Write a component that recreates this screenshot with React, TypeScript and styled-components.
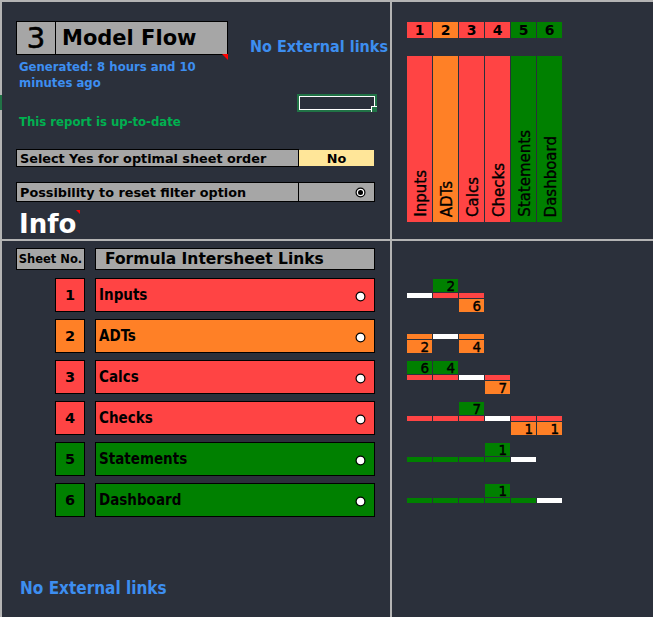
import React from 'react';
import styled, { createGlobalStyle } from 'styled-components';

const C = {
  bg: '#2b303b',
  line: '#b4b4b4',
  gray: '#a6a6a6',
  red: '#ff4444',
  orange: '#ff8026',
  green: '#008000',
  yellow: '#ffe699',
  blue: '#3d8ef0',
  ok: '#00b050',
  sel: '#217346',
};

const VERDANA = `"DejaVu Sans", Verdana, sans-serif`;
const TAHOMA = `"DejaVu Sans Condensed", "DejaVu Sans", sans-serif`;

const GlobalStyle = createGlobalStyle`
  html, body { margin: 0; padding: 0; background: ${C.bg}; }
  #root { width: 653px; height: 617px; }
`;

const Page = styled.div`
  width: 653px;
  height: 617px;
  box-sizing: border-box;
  padding: 2px 0 0 2px;
  background: ${C.line};
  display: grid;
  grid-template-columns: 388px 1fr;
  grid-template-rows: 237px 1fr;
  gap: 2px;
  position: relative;
  overflow: hidden;
  font-family: ${VERDANA};
  color: #000;
`;

const RowMarker = styled.div`
  position: absolute;
  left: 0;
  top: 95px;
  width: 2px;
  height: 15px;
  background: ${C.sel};
`;

const Panel = styled.section<{ $pad: string }>`
  background: ${C.bg};
  display: flex;
  flex-direction: column;
  align-items: flex-start;
  padding: ${(p) => p.$pad};
  min-width: 0;
  min-height: 0;
`;

/* ---------- top-left ---------- */
const TitleRow = styled.div`
  display: flex;
  align-items: flex-end;
`;

const TitleBox = styled.div`
  position: relative;
  display: flex;
  width: 212px;
  height: 34px;
  box-sizing: border-box;
  border: 1px solid #000;
  background: ${C.gray};
`;

const TitleNum = styled.div`
  width: 38px;
  border-right: 1px solid #000;
  display: flex;
  align-items: center;
  justify-content: center;
  font-size: 29px;
  line-height: 1;
  -webkit-text-stroke: 0.6px #000;
`;

const TitleName = styled.div`
  flex: 1;
  display: flex;
  align-items: center;
  padding-left: 6px;
  font-size: 21px;
  font-weight: bold;
  line-height: 1;
`;

const CommentMark = styled.span<{ $size: number }>`
  position: absolute;
  width: 0;
  height: 0;
  border-left: ${(p) => p.$size}px solid transparent;
  border-top: ${(p) => p.$size}px solid #ff0000;
`;

const TitleComment = styled(CommentMark)`
  right: -1px;
  top: 100%;
`;

const LinkNote = styled.div<{ $size: number }>`
  font-family: ${TAHOMA};
  font-stretch: condensed;
  font-weight: bold;
  font-size: ${(p) => p.$size}px;
  line-height: ${(p) => p.$size + 3}px;
  color: ${C.blue};
  white-space: nowrap;
`;

const TopLink = styled(LinkNote)`
  margin-left: 22px;
  margin-bottom: -1px;
`;

const InfoLine = styled.div<{ $color: string; $mt: number }>`
  margin-top: ${(p) => p.$mt}px;
  padding-left: 3px;
  font-family: ${TAHOMA};
  font-stretch: condensed;
  font-weight: bold;
  font-size: 13px;
  line-height: 16px;
  color: ${(p) => p.$color};
  white-space: nowrap;
`;

const SelRow = styled.div`
  align-self: stretch;
  display: flex;
  justify-content: flex-end;
  margin-top: 3px;
`;

const SelBox = styled.div`
  position: relative;
  width: 80px;
  height: 18px;
  box-sizing: border-box;
  border: 2px solid ${C.sel};
  box-shadow: inset 0 0 0 1px #fff;
`;

const FillHandle = styled.span`
  position: absolute;
  right: -2px;
  bottom: -2px;
  width: 5px;
  height: 5px;
  background: ${C.sel};
  border-left: 1px solid #fff;
  border-top: 1px solid #fff;
`;

const OptionRow = styled.div<{ $h: number; $mt: number }>`
  display: flex;
  align-items: center;
  height: ${(p) => p.$h}px;
  margin-top: ${(p) => p.$mt}px;
`;

const OptionLabel = styled.div`
  width: 283px;
  height: 100%;
  box-sizing: border-box;
  border: 1px solid #000;
  background: ${C.gray};
  display: flex;
  align-items: center;
  padding-left: 3px;
  font-size: 12.8px;
  font-weight: bold;
  white-space: nowrap;
`;

const YesNo = styled.div`
  width: 75px;
  height: 16px;
  background: ${C.yellow};
  display: flex;
  align-items: center;
  justify-content: center;
  font-size: 12.8px;
  font-weight: bold;
`;

const OptionValue = styled.div`
  width: 76px;
  height: 100%;
  box-sizing: border-box;
  border: 1px solid #000;
  border-left: none;
  background: ${C.gray};
  display: flex;
  align-items: center;
  justify-content: flex-end;
  padding-right: 8px;
`;

const InfoTitle = styled.div`
  position: relative;
  margin-top: 7px;
  padding-left: 3px;
  font-size: 26px;
  line-height: 30px;
  font-weight: bold;
  color: #fff;
`;

const InfoComment = styled(CommentMark)`
  left: 100%;
  top: 1px;
`;

/* ---------- top-right ---------- */
const ColGrid = styled.div<{ $h: number; $mt: number }>`
  display: grid;
  grid-template-columns: repeat(6, 25px);
  column-gap: 1px;
  height: ${(p) => p.$h}px;
  margin-top: ${(p) => p.$mt}px;
`;

const NumHead = styled.div<{ $bg: string }>`
  background: ${(p) => p.$bg};
  display: flex;
  align-items: center;
  justify-content: center;
  font-size: 14px;
  font-weight: bold;
  line-height: 16px;
`;

const VertHead = styled.div<{ $bg: string }>`
  background: ${(p) => p.$bg};
  display: flex;
  justify-content: center;
  align-items: flex-end;
  padding: 0 0 5px 3px;
  box-sizing: border-box;
`;

const VertText = styled.span`
  writing-mode: vertical-rl;
  transform: rotate(180deg);
  font-size: 15px;
  line-height: 17px;
  white-space: nowrap;
  -webkit-text-stroke: 0.35px #000;
`;

/* ---------- bottom-left ---------- */
const ListHeader = styled.div`
  display: flex;
  gap: 10px;
`;

const HeadBox = styled.div<{ $w: number; $size: number; $center?: boolean }>`
  width: ${(p) => p.$w}px;
  height: 22px;
  box-sizing: border-box;
  border: 1px solid #000;
  background: ${C.gray};
  display: flex;
  align-items: center;
  justify-content: ${(p) => (p.$center ? 'center' : 'flex-start')};
  padding-left: ${(p) => (p.$center ? 0 : 9)}px;
  font-size: ${(p) => p.$size}px;
  font-weight: bold;
  white-space: nowrap;
`;

const SheetList = styled.div`
  display: flex;
  flex-direction: column;
  gap: 7px;
  margin-top: 8px;
`;

const SheetRow = styled.div`
  display: flex;
  gap: 10px;
  padding-left: 39px;
`;

const SheetNum = styled.div<{ $bg: string }>`
  width: 30px;
  height: 34px;
  box-sizing: border-box;
  border: 1px solid #000;
  background: ${(p) => p.$bg};
  display: flex;
  align-items: center;
  justify-content: center;
  font-size: 14.5px;
  font-weight: bold;
`;

const SheetName = styled.div<{ $bg: string }>`
  width: 280px;
  height: 34px;
  box-sizing: border-box;
  border: 1px solid #000;
  background: ${(p) => p.$bg};
  display: flex;
  align-items: center;
  justify-content: space-between;
  padding: 0 8px 0 3px;
  font-family: ${TAHOMA};
  font-stretch: condensed;
  font-size: 15px;
  font-weight: bold;
`;

const BottomLink = styled(LinkNote)`
  margin-top: 61px;
  padding-left: 4px;
`;

/* ---------- bottom-right ---------- */
const Matrix = styled.div`
  display: flex;
  flex-direction: column;
  gap: 8px;
`;

const Block = styled.div`
  display: grid;
  grid-template-columns: repeat(6, 25px);
  grid-template-rows: 13px 5px 13px;
  gap: 1px;
`;

const Cell = styled.div<{ $bg: string; $col: number; $row: number }>`
  grid-column: ${(p) => p.$col + 1};
  grid-row: ${(p) => p.$row};
  background: ${(p) => p.$bg};
  font-size: 13.5px;
  line-height: 14px;
  text-align: right;
  padding-right: 3px;
  -webkit-text-stroke: 0.4px #000;
`;

const Radio = ({ filled }: { filled?: boolean }) => (
  <svg width="11" height="11" viewBox="0 0 11 11" style={{ marginTop: filled ? 0 : 2 }}>
    <circle cx="5.5" cy="5.5" r="4.4" fill="#fff" stroke="#000" strokeWidth="1.2" />
    {filled && <circle cx="5.5" cy="5.5" r="2.5" fill="#000" />}
  </svg>
);

type Sheet = {
  no: number;
  name: string;
  color: string;
  span: number;
  self: number;
  above: Record<number, string>;
  below: Record<number, string>;
};

const sheets: Sheet[] = [
  { no: 1, name: 'Inputs', color: C.red, span: 3, self: 0, above: { 1: '2' }, below: { 2: '6' } },
  { no: 2, name: 'ADTs', color: C.orange, span: 3, self: 1, above: {}, below: { 0: '2', 2: '4' } },
  { no: 3, name: 'Calcs', color: C.red, span: 4, self: 2, above: { 0: '6', 1: '4' }, below: { 3: '7' } },
  { no: 4, name: 'Checks', color: C.red, span: 6, self: 3, above: { 2: '7' }, below: { 4: '1', 5: '1' } },
  { no: 5, name: 'Statements', color: C.green, span: 5, self: 4, above: { 3: '1' }, below: {} },
  { no: 6, name: 'Dashboard', color: C.green, span: 6, self: 5, above: { 3: '1' }, below: {} },
];

export default function App() {
  return (
    <>
      <GlobalStyle />
      <Page>
        <RowMarker />

        <Panel $pad="19px 13px 0 14px">
          <TitleRow>
            <TitleBox>
              <TitleNum>3</TitleNum>
              <TitleName>Model Flow</TitleName>
              <TitleComment $size={6} />
            </TitleBox>
            <TopLink $size={16}>No External links</TopLink>
          </TitleRow>
          <InfoLine $color={C.blue} $mt={4}>
            Generated: 8 hours and 10
            <br />
            minutes ago
          </InfoLine>
          <SelRow>
            <SelBox>
              <FillHandle />
            </SelBox>
          </SelRow>
          <InfoLine $color={C.ok} $mt={2}>
            This report is up-to-date
          </InfoLine>
          <OptionRow $h={18} $mt={19}>
            <OptionLabel>Select Yes for optimal sheet order</OptionLabel>
            <YesNo>No</YesNo>
          </OptionRow>
          <OptionRow $h={20} $mt={15}>
            <OptionLabel>Possibility to reset filter option</OptionLabel>
            <OptionValue>
              <Radio filled />
            </OptionValue>
          </OptionRow>
          <InfoTitle>
            Info
            <InfoComment $size={4} />
          </InfoTitle>
        </Panel>

        <Panel $pad="20px 0 0 15px">
          <ColGrid $h={16} $mt={0}>
            {sheets.map((s) => (
              <NumHead key={s.no} $bg={s.color}>
                {s.no}
              </NumHead>
            ))}
          </ColGrid>
          <ColGrid $h={166} $mt={18}>
            {sheets.map((s) => (
              <VertHead key={s.no} $bg={s.color}>
                <VertText>{s.name}</VertText>
              </VertHead>
            ))}
          </ColGrid>
        </Panel>

        <Panel $pad="7px 0 0 14px">
          <ListHeader>
            <HeadBox $w={69} $size={11.5} $center>
              Sheet No.
            </HeadBox>
            <HeadBox $w={280} $size={15.5}>
              Formula Intersheet Links
            </HeadBox>
          </ListHeader>
          <SheetList>
            {sheets.map((s) => (
              <SheetRow key={s.no}>
                <SheetNum $bg={s.color}>{s.no}</SheetNum>
                <SheetName $bg={s.color}>
                  <span>{s.name}</span>
                  <Radio />
                </SheetName>
              </SheetRow>
            ))}
          </SheetList>
          <BottomLink $size={17}>No External links</BottomLink>
        </Panel>

        <Panel $pad="38px 0 0 15px">
          <Matrix>
            {sheets.map((s) => (
              <Block key={s.no}>
                {Object.entries(s.above).map(([c, v]) => (
                  <Cell key={'a' + c} $bg={C.green} $col={Number(c)} $row={1}>
                    {v}
                  </Cell>
                ))}
                {Array.from({ length: s.span }, (_, i) => (
                  <Cell key={'b' + i} $bg={i === s.self ? '#ffffff' : s.color} $col={i} $row={2} />
                ))}
                {Object.entries(s.below).map(([c, v]) => (
                  <Cell key={'c' + c} $bg={C.orange} $col={Number(c)} $row={3}>
                    {v}
                  </Cell>
                ))}
              </Block>
            ))}
          </Matrix>
        </Panel>
      </Page>
    </>
  );
}
